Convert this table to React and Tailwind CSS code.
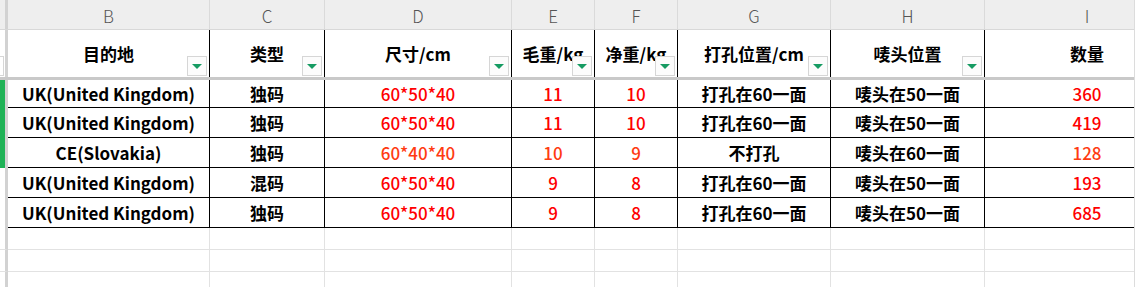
const font = { fontFamily: '"Noto Sans CJK SC", "Noto Sans", sans-serif' };

const letters = ["B", "C", "D", "E", "F", "G", "H", "I"];
const widths = [
  "w-[202px]",
  "w-[115px]",
  "w-[187px]",
  "w-[83px]",
  "w-[83px]",
  "w-[153px]",
  "w-[154px]",
  "w-[205px]",
];

const headers = ["目的地", "类型", "尺寸/cm", "毛重/kg", "净重/kg", "打孔位置/cm", "唛头位置", "数量"];

const rows = [
  { cells: ["UK(United Kingdom)", "独码", "60*50*40", "11", "10", "打孔在60一面", "唛头在50一面", "360"], h: "h-[28px]", mark: true },
  { cells: ["UK(United Kingdom)", "独码", "60*50*40", "11", "10", "打孔在60一面", "唛头在50一面", "419"], h: "h-[30px]", mark: true },
  { cells: ["CE(Slovakia)", "独码", "60*40*40", "10", "9", "不打孔", "唛头在60一面", "128"], h: "h-[30px]", mark: true, orange: true },
  { cells: ["UK(United Kingdom)", "混码", "60*50*40", "9", "8", "打孔在60一面", "唛头在50一面", "193"], h: "h-[30px]" },
  { cells: ["UK(United Kingdom)", "独码", "60*50*40", "9", "8", "打孔在60一面", "唛头在50一面", "685"], h: "h-[30px]" },
];

const redCols = [2, 3, 4, 7];

function FilterButton() {
  return (
    <div className="absolute bottom-[1px] right-[2px] flex h-[20px] w-[20px] items-center justify-center border border-[#d6d6d6] bg-[#fcfcfc]">
      <div className="h-0 w-0 border-x-[5px] border-t-[5px] border-x-transparent border-t-[#169b62]" />
    </div>
  );
}

function Gutter({ className = "", children }) {
  return (
    <div className={`relative w-[8px] shrink-0 border-r-[3px] border-[#d2d2d2] ${className}`}>
      {children}
    </div>
  );
}

export default function App() {
  return (
    <div className="h-[287px] w-[1136px] overflow-hidden bg-white" style={font}>
      <div className="h-full w-[1135px] overflow-hidden border-r border-[#dcdcdc]">
        {/* column letters */}
        <div className="flex h-[30px] border-b border-[#d8d8d8] bg-[#eeeeee]">
          <Gutter />
          {letters.map((l, i) => (
            <div
              key={l}
              className={`${widths[i]} flex shrink-0 items-center justify-center border-r border-[#dadada] pt-[2px] text-[17px] font-light text-[#555]`}
            >
              {l}
            </div>
          ))}
        </div>

        {/* header row */}
        <div className="flex h-[50px] border-b-[3px] border-[#c9c9c9]">
          <Gutter>
            <div className="absolute bottom-[1px] left-0 h-[20px] w-[4px] border border-l-0 border-[#d6d6d6]" />
          </Gutter>
          {headers.map((h, i) => (
            <div
              key={h}
              className={`${widths[i]} relative flex shrink-0 items-center justify-center overflow-hidden border-r ${
                i === 7 ? "border-[#dadada]" : "border-black"
              } text-[17px] font-bold whitespace-nowrap text-black`}
            >
              {h}
              {i < 7 && <FilterButton />}
            </div>
          ))}
        </div>

        {/* data rows */}
        {rows.map((r, ri) => (
          <div key={ri} className={`flex ${r.h}`}>
            <Gutter className={r.mark ? "bg-[#1fb256]" : ""} />
            {r.cells.map((c, i) => (
              <div
                key={i}
                className={`${widths[i]} flex shrink-0 items-center justify-center border-r border-b border-black text-[17px] whitespace-nowrap ${
                  redCols.includes(i)
                    ? r.orange
                      ? "font-medium text-[#ff3b12]"
                      : "font-medium text-[#ff0000]"
                    : "font-bold text-black"
                }`}
              >
                {c}
              </div>
            ))}
          </div>
        ))}

        {/* empty rows */}
        {["h-[22px]", "h-[22px]", "h-[22px]"].map((h, ri) => (
          <div key={ri} className={`flex ${h}`}>
            <Gutter className="border-b border-b-[#e2e2e2]" />
            {widths.map((w, i) => (
              <div key={i} className={`${w} shrink-0 border-r border-b border-[#e2e2e2]`} />
            ))}
          </div>
        ))}
      </div>
    </div>
  );
}
